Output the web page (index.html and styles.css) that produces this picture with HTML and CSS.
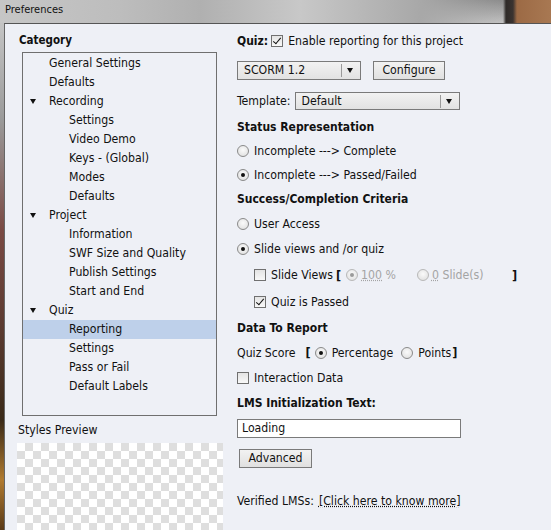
FILE: index.html
```html
<!DOCTYPE html>
<html lang="en">
<head>
    <meta charset="UTF-8">
    <title>Preferences</title>
    <link rel="stylesheet" href="styles.css">
</head>
<body>
    <div class="titlebar">Preferences</div>

    <div class="dialog">
        <div class="left-col">
            <div class="cat-label">Category</div>
            <div class="tree">
                <div class="tree-row lvl1">General Settings</div>
                <div class="tree-row lvl1">Defaults</div>
                <div class="tree-row lvl1 open"><span class="arrow"></span>Recording</div>
                <div class="tree-row lvl2">Settings</div>
                <div class="tree-row lvl2">Video Demo</div>
                <div class="tree-row lvl2">Keys - (Global)</div>
                <div class="tree-row lvl2">Modes</div>
                <div class="tree-row lvl2">Defaults</div>
                <div class="tree-row lvl1 open"><span class="arrow"></span>Project</div>
                <div class="tree-row lvl2">Information</div>
                <div class="tree-row lvl2">SWF Size and Quality</div>
                <div class="tree-row lvl2">Publish Settings</div>
                <div class="tree-row lvl2">Start and End</div>
                <div class="tree-row lvl1 open"><span class="arrow"></span>Quiz</div>
                <div class="tree-row lvl2 selected">Reporting</div>
                <div class="tree-row lvl2">Settings</div>
                <div class="tree-row lvl2">Pass or Fail</div>
                <div class="tree-row lvl2">Default Labels</div>
            </div>
            <div class="preview-label">Styles Preview</div>
            <div class="preview"></div>
        </div>

        <div class="right-col">
            <div class="row">
                <b class="heading">Quiz:</b>
                <span class="check checked"></span>
                <span class="lbl">Enable reporting for this project</span>
            </div>

            <div class="row controls">
                <div class="select scorm"><span class="sel-text">SCORM 1.2</span><span class="sel-arrow"></span></div>
                <div class="button configure">Configure</div>
            </div>

            <div class="row template">
                <span>Template:</span>
                <div class="select tpl"><span class="sel-text">Default</span><span class="sel-arrow"></span></div>
            </div>

            <div class="row heading">Status Representation</div>
            <div class="row"><span class="radio"></span><span class="lbl">Incomplete ---&gt; Complete</span></div>
            <div class="row"><span class="radio on"></span><span class="lbl">Incomplete ---&gt; Passed/Failed</span></div>

            <div class="row heading">Success/Completion Criteria</div>

            <div class="criteria">
                <div class="row"><span class="radio"></span><span class="lbl">User Access</span></div>
                <div class="row"><span class="radio on"></span><span class="lbl">Slide views and /or quiz</span></div>

                <div class="row sub slide-views">
                    <span class="check"></span>
                    <span class="lbl">Slide Views</span>
                    <span class="bracket">[</span>
                    <span class="radio on disabled"></span>
                    <span class="lbl muted"><u>100</u> %</span>
                    <span class="radio disabled gap"></span>
                    <span class="lbl muted slides"><u>0</u> Slide(s)</span>
                    <span class="bracket end">]</span>
                </div>
                <div class="row sub quiz-passed">
                    <span class="check checked"></span>
                    <span class="lbl">Quiz is Passed</span>
                </div>

                <div class="row heading">Data To Report</div>
                <div class="row">
                    <span>Quiz Score</span>
                    <span class="bracket score">[</span>
                    <span class="radio on"></span>
                    <span class="lbl">Percentage</span>
                    <span class="radio gap-sm"></span>
                    <span class="lbl">Points</span>
                    <span class="bracket close">]</span>
                </div>
                <div class="row"><span class="check"></span><span class="lbl">Interaction Data</span></div>

                <div class="row heading">LMS Initialization Text:</div>
            </div>

            <div class="textbox">Loading</div>
            <div class="button advanced">Advanced</div>

            <div class="row verified">
                <span>Verified LMSs:</span>
                <span class="link">[Click here to know more]</span>
            </div>
        </div>
    </div>
</body>
</html>
```

FILE: styles.css
```css
html, body {
    height: 100%;
}

body {
    margin: 0;
    overflow: hidden;
    font-family: "DejaVu Sans Condensed", "DejaVu Sans", sans-serif;
    font-size: 12.2px;
    color: #111;
    background:
        linear-gradient(to right, transparent 503px, #2e2a28 506px, #3a3330 513px, #9c6a45 517px, #a87852 551px),
        linear-gradient(to bottom, #8c8c8c, #a8a8a8 12px, #c4c4c4 24px, #9a9a9a 120px, #7a4a44 230px, #5a3a30 330px, #3a2a18 420px, #b07a30 480px, #5a3a18 530px);
}

.titlebar {
    height: 23px;
    line-height: 20px;
    padding-left: 5px;
    font-size: 11px;
    color: #111;
    background: linear-gradient(to right, #c6c6c6, #bdbdbd 120px, #b0b0b0 200px, #c8c8c8 300px, #a8a8a8 420px, transparent 503px);
}

.dialog {
    display: flex;
    margin-left: 4px;
    height: calc(100% - 24px);
    background: #eef0f6;
    border-top: 1px solid #555;
    border-left: 1px solid #666;
}

/* left side: category tree */
.left-col {
    width: 216px;
    padding: 5px 0 0 12px;
    flex-shrink: 0;
}

.cat-label {
    height: 23px;
    line-height: 22px;
    padding-left: 2px;
    font-weight: bold;
    font-size: 11.5px;
}

.tree {
    box-sizing: border-box;
    margin-left: 5px;
    width: 195px;
    height: 364px;
    padding-top: 1px;
    border: 1px solid #6f6f6f;
    background: #eef0f6;
}

.tree-row {
    position: relative;
    height: 19px;
    line-height: 19px;
    white-space: nowrap;
}

.lvl1 {
    padding-left: 26px;
}

.lvl2 {
    padding-left: 46px;
}

.tree-row.selected {
    background: #bed0ea;
}

.arrow {
    position: absolute;
    left: 7px;
    top: 7px;
    width: 0;
    height: 0;
    border-left: 3.5px solid transparent;
    border-right: 3.5px solid transparent;
    border-top: 5px solid #111;
}

.preview-label {
    margin-top: 5px;
    height: 19px;
    line-height: 19px;
    padding-left: 1px;
}

.preview {
    margin-top: 3px;
    width: 206px;
    height: 100px;
    background-color: #fff;
    background-image: conic-gradient(#dedede 25%, #fff 0 50%, #dedede 0 75%, #fff 0);
    background-size: 16px 16px;
}

/* right side: reporting options */
.right-col {
    padding: 5px 0 0 4px;
    flex: 1;
}

.row {
    display: flex;
    align-items: center;
    height: 24px;
    white-space: nowrap;
}

.criteria .row {
    height: 25px;
}

.criteria .row.slide-views {
    height: 28px;
}

.criteria .row.quiz-passed {
    height: 26px;
}

.row.sub {
    padding-left: 17px;
}

.heading {
    font-weight: bold;
    font-size: 12px;
}

.lbl {
    margin-left: 5px;
}

.muted {
    color: #a4a4a4;
    margin-left: 3px;
}

.muted u {
    text-decoration: underline dotted;
}

.check {
    position: relative;
    width: 10px;
    height: 10px;
    border: 1px solid #707070;
    background: linear-gradient(#e4e4e4, #f8f8f8);
    flex-shrink: 0;
}

.row > b + .check {
    margin-left: 3px;
}

.check.checked::after {
    content: "";
    position: absolute;
    left: 3px;
    top: 0px;
    width: 3px;
    height: 7px;
    border-right: 1.6px solid #111;
    border-bottom: 1.6px solid #111;
    transform: rotate(40deg);
}

.radio {
    position: relative;
    width: 10px;
    height: 10px;
    border: 1px solid #8a8a8a;
    border-radius: 50%;
    background: radial-gradient(circle at 50% 40%, #fafafa, #dcdcdc);
    flex-shrink: 0;
}

.radio.on::after {
    content: "";
    position: absolute;
    left: 3px;
    top: 3px;
    width: 4px;
    height: 4px;
    border-radius: 50%;
    background: #111;
}

.radio.disabled {
    border-color: #b8b8b8;
}

.radio.disabled.on::after {
    background: #9a9a9a;
}

.radio.gap {
    margin-left: 21px;
}

.radio.gap-sm {
    margin-left: 8px;
}

.bracket {
    font-weight: bold;
    font-size: 12.5px;
    margin: 0 5px 0 3px;
}

.bracket.end {
    margin-left: 0;
}

.muted.slides {
    width: 80px;
}

.bracket.score {
    margin-left: 10px;
    margin-right: 4px;
}

.bracket.close {
    margin-left: 1px;
}

.controls {
    height: 19px;
    margin-top: 8px;
}

.select {
    position: relative;
    box-sizing: border-box;
    height: 19px;
    line-height: 17px;
    border: 1px solid #7a7a7a;
    background: linear-gradient(#f2f2f2, #e2e2e2);
    padding-left: 6px;
}

.select.scorm {
    width: 124px;
}

.select.tpl {
    width: 165px;
    margin-left: 4px;
}

.sel-arrow {
    position: absolute;
    right: 0;
    top: 2px;
    width: 18px;
    height: 13px;
    border-left: 1px solid #9a9a9a;
}

.sel-arrow::after {
    content: "";
    position: absolute;
    left: 5px;
    top: 4px;
    border-left: 3.5px solid transparent;
    border-right: 3.5px solid transparent;
    border-top: 5px solid #111;
}

.button {
    box-sizing: border-box;
    height: 19px;
    line-height: 17px;
    border: 1px solid #7a7a7a;
    background: linear-gradient(#f2f2f2, #e0e0e0);
    text-align: center;
}

.button.configure {
    width: 72px;
    margin-left: 12px;
}

.template {
    height: 18px;
    margin-top: 12px;
}

.template .select {
    height: 18px;
    line-height: 16px;
}

.template + .heading {
    margin-top: 5px;
}

.textbox {
    box-sizing: border-box;
    width: 224px;
    height: 19px;
    line-height: 17px;
    margin-top: 4px;
    padding-left: 4px;
    border: 1px solid #7a7a7a;
    background: #fff;
}

.button.advanced {
    width: 73px;
    margin: 11px 0 0 2px;
}

.verified {
    margin-top: 21px;
}

.link {
    margin-left: 5px;
    text-decoration: underline dotted;
}
```
